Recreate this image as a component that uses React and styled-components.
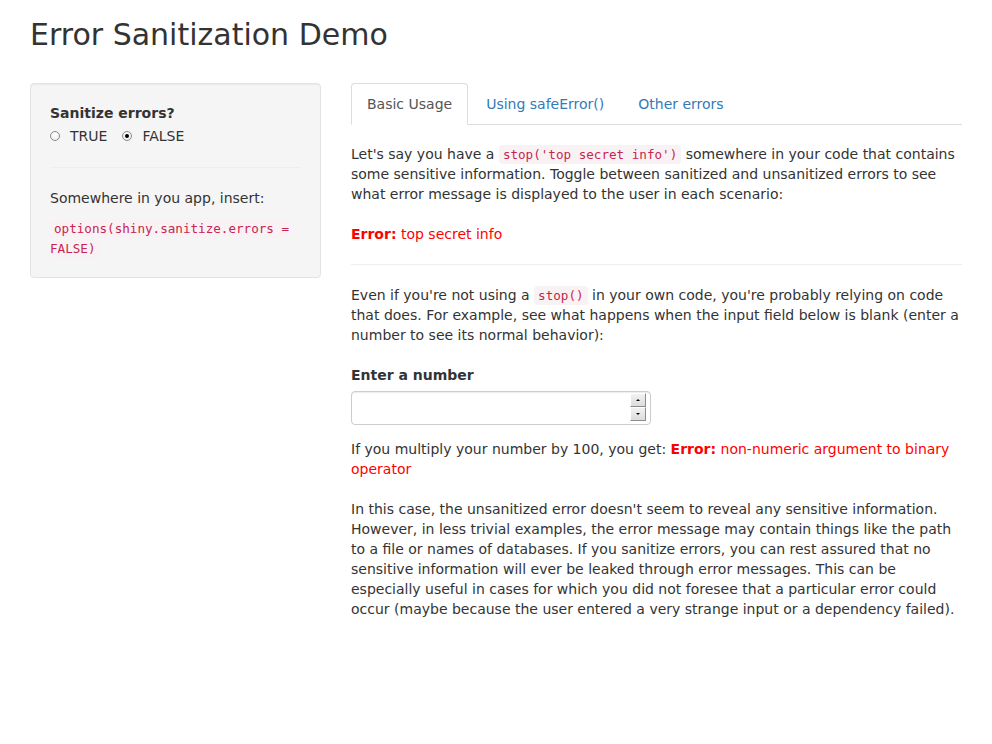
import React from 'react';
import styled, { createGlobalStyle } from 'styled-components';

const GlobalStyle = createGlobalStyle`
  html, body {
    margin: 0;
    padding: 0;
    background: #ffffff;
  }
  body {
    font-family: 'DejaVu Sans', 'Liberation Sans', sans-serif;
    font-size: 14px;
    line-height: 20px;
    color: #333333;
  }
  * {
    box-sizing: border-box;
  }
`;

const Page = styled.div`
  padding: 0 30px 30px;
`;

const Title = styled.h2`
  margin: 18px 0 0;
  font-size: 30px;
  font-weight: 500;
  line-height: 33px;
  color: #333333;
`;

const Layout = styled.div`
  display: grid;
  grid-template-columns: 291px 611px;
  column-gap: 30px;
  margin-top: 32px;
  align-items: start;
`;

const Well = styled.div`
  background: #f5f5f5;
  border: 1px solid #e3e3e3;
  border-radius: 4px;
  box-shadow: inset 0 1px 1px rgba(0, 0, 0, 0.05);
  padding: 19px 19px 19px;
`;

const Label = styled.div`
  font-weight: 700;
  margin-bottom: ${(p) => p.$gap || 3}px;
`;

const RadioRow = styled.div`
  display: flex;
  align-items: center;
  gap: 15px;
`;

const RadioOption = styled.label`
  display: flex;
  align-items: center;
  gap: 10px;
`;

const RadioDot = styled.span`
  width: 10px;
  height: 10px;
  border-radius: 50%;
  border: 1px solid #8a8a8a;
  background: radial-gradient(circle at 50% 35%, #ffffff 0%, #e8e8e8 100%);
  display: inline-flex;
  align-items: center;
  justify-content: center;

  &::after {
    content: '';
    width: 4px;
    height: 4px;
    border-radius: 50%;
    background: ${(p) => (p.$checked ? '#000000' : 'transparent')};
  }
`;

const Rule = styled.hr`
  border: 0;
  border-top: 1px solid #eeeeee;
  margin: ${(p) => p.$margin || '20px 0'};
`;

const Para = styled.p`
  margin: 0 0 ${(p) => (p.$mb !== undefined ? p.$mb : 10)}px;
`;

const Code = styled.code`
  font-family: 'DejaVu Sans Mono', 'Liberation Mono', monospace;
  font-size: 90%;
  line-height: 1;
  color: #c7254e;
  background: #f9f2f4;
  padding: 2px 4px;
  border-radius: 4px;
`;

const Tabs = styled.ul`
  display: flex;
  list-style: none;
  margin: 0;
  padding: 0;
  border-bottom: 1px solid #dddddd;
`;

const Tab = styled.li`
  margin-right: 2px;
  margin-bottom: -1px;
  padding: 10px 15px;
  line-height: 20px;
  border: 1px solid ${(p) => (p.$active ? '#dddddd' : 'transparent')};
  border-bottom-color: transparent;
  border-radius: 4px 4px 0 0;
  background: ${(p) => (p.$active ? '#ffffff' : 'transparent')};
  color: ${(p) => (p.$active ? '#555555' : '#337ab7')};
`;

const TabBody = styled.div`
  padding-top: 19px;
`;

const ErrorText = styled.div`
  color: #ff0000;
  margin: 20px 0 0;
`;

const ErrorInline = styled.span`
  color: #ff0000;
`;

const Strong = styled.b`
  font-weight: 700;
`;

const FieldGroup = styled.div`
  margin: 20px 0 14px;
`;

const InputWrap = styled.div`
  position: relative;
  width: 300px;
`;

const NumberInput = styled.input`
  display: block;
  width: 100%;
  height: 34px;
  padding: 6px 12px;
  font: inherit;
  color: #555555;
  background: #ffffff;
  border: 1px solid #cccccc;
  border-radius: 4px;
  box-shadow: inset 0 1px 1px rgba(0, 0, 0, 0.075);
  outline: none;
`;

const Spinner = styled.div`
  position: absolute;
  right: 5px;
  top: 2px;
  display: flex;
  flex-direction: column;
  width: 16px;
`;

const SpinButton = styled.span`
  height: 14px;
  background: linear-gradient(#f2f2f2, #dcdcdc);
  border: 1px solid #ffffff;
  border-right-color: #8c8c8c;
  border-bottom-color: #8c8c8c;
  display: flex;
  align-items: center;
  justify-content: center;

  &::after {
    content: '';
    border-left: 2px solid transparent;
    border-right: 2px solid transparent;
    ${(p) =>
      p.$up
        ? 'border-bottom: 2px solid #000;'
        : 'border-top: 2px solid #000;'}
  }
`;

export default function App() {
  return (
    <Page>
      <GlobalStyle />
      <Title>Error Sanitization Demo</Title>
      <Layout>
        <Well>
          <Label>Sanitize errors?</Label>
          <RadioRow>
            <RadioOption>
              <RadioDot />
              TRUE
            </RadioOption>
            <RadioOption>
              <RadioDot $checked />
              FALSE
            </RadioOption>
          </RadioRow>
          <Rule $margin="21px 0 20px" />
          <Para>Somewhere in you app, insert:</Para>
          <Para $mb={0}>
            <Code>options(shiny.sanitize.errors = FALSE)</Code>
          </Para>
        </Well>

        <div>
          <Tabs>
            <Tab $active>Basic Usage</Tab>
            <Tab>Using safeError()</Tab>
            <Tab>Other errors</Tab>
          </Tabs>
          <TabBody>
            <Para $mb={0}>
              Let's say you have a <Code>stop('top secret info')</Code> somewhere in your
              code that contains some sensitive information. Toggle between sanitized and
              unsanitized errors to see what error message is displayed to the user in
              each scenario:
            </Para>
            <ErrorText>
              <Strong>Error:</Strong> top secret info
            </ErrorText>
            <Rule $margin="20px 0 20px" />
            <Para $mb={0}>
              Even if you're not using a <Code>stop()</Code> in your own code, you're
              probably relying on code that does. For example, see what happens when the
              input field below is blank (enter a number to see its normal behavior):
            </Para>
            <FieldGroup>
              <Label $gap={6}>Enter a number</Label>
              <InputWrap>
                <NumberInput type="text" />
                <Spinner>
                  <SpinButton $up />
                  <SpinButton />
                </Spinner>
              </InputWrap>
            </FieldGroup>
            <Para $mb={20}>
              If you multiply your number by 100, you get:{' '}
              <ErrorInline>
                <Strong>Error:</Strong> non-numeric argument to binary operator
              </ErrorInline>
            </Para>
            <Para>
              In this case, the unsanitized error doesn't seem to reveal any sensitive
              information. However, in less trivial examples, the error message may
              contain things like the path to a file or names of databases. If you
              sanitize errors, you can rest assured that no sensitive information will
              ever be leaked through error messages. This can be especially useful in
              cases for which you did not foresee that a particular error could occur
              (maybe because the user entered a very strange input or a dependency
              failed).
            </Para>
          </TabBody>
        </div>
      </Layout>
    </Page>
  );
}
